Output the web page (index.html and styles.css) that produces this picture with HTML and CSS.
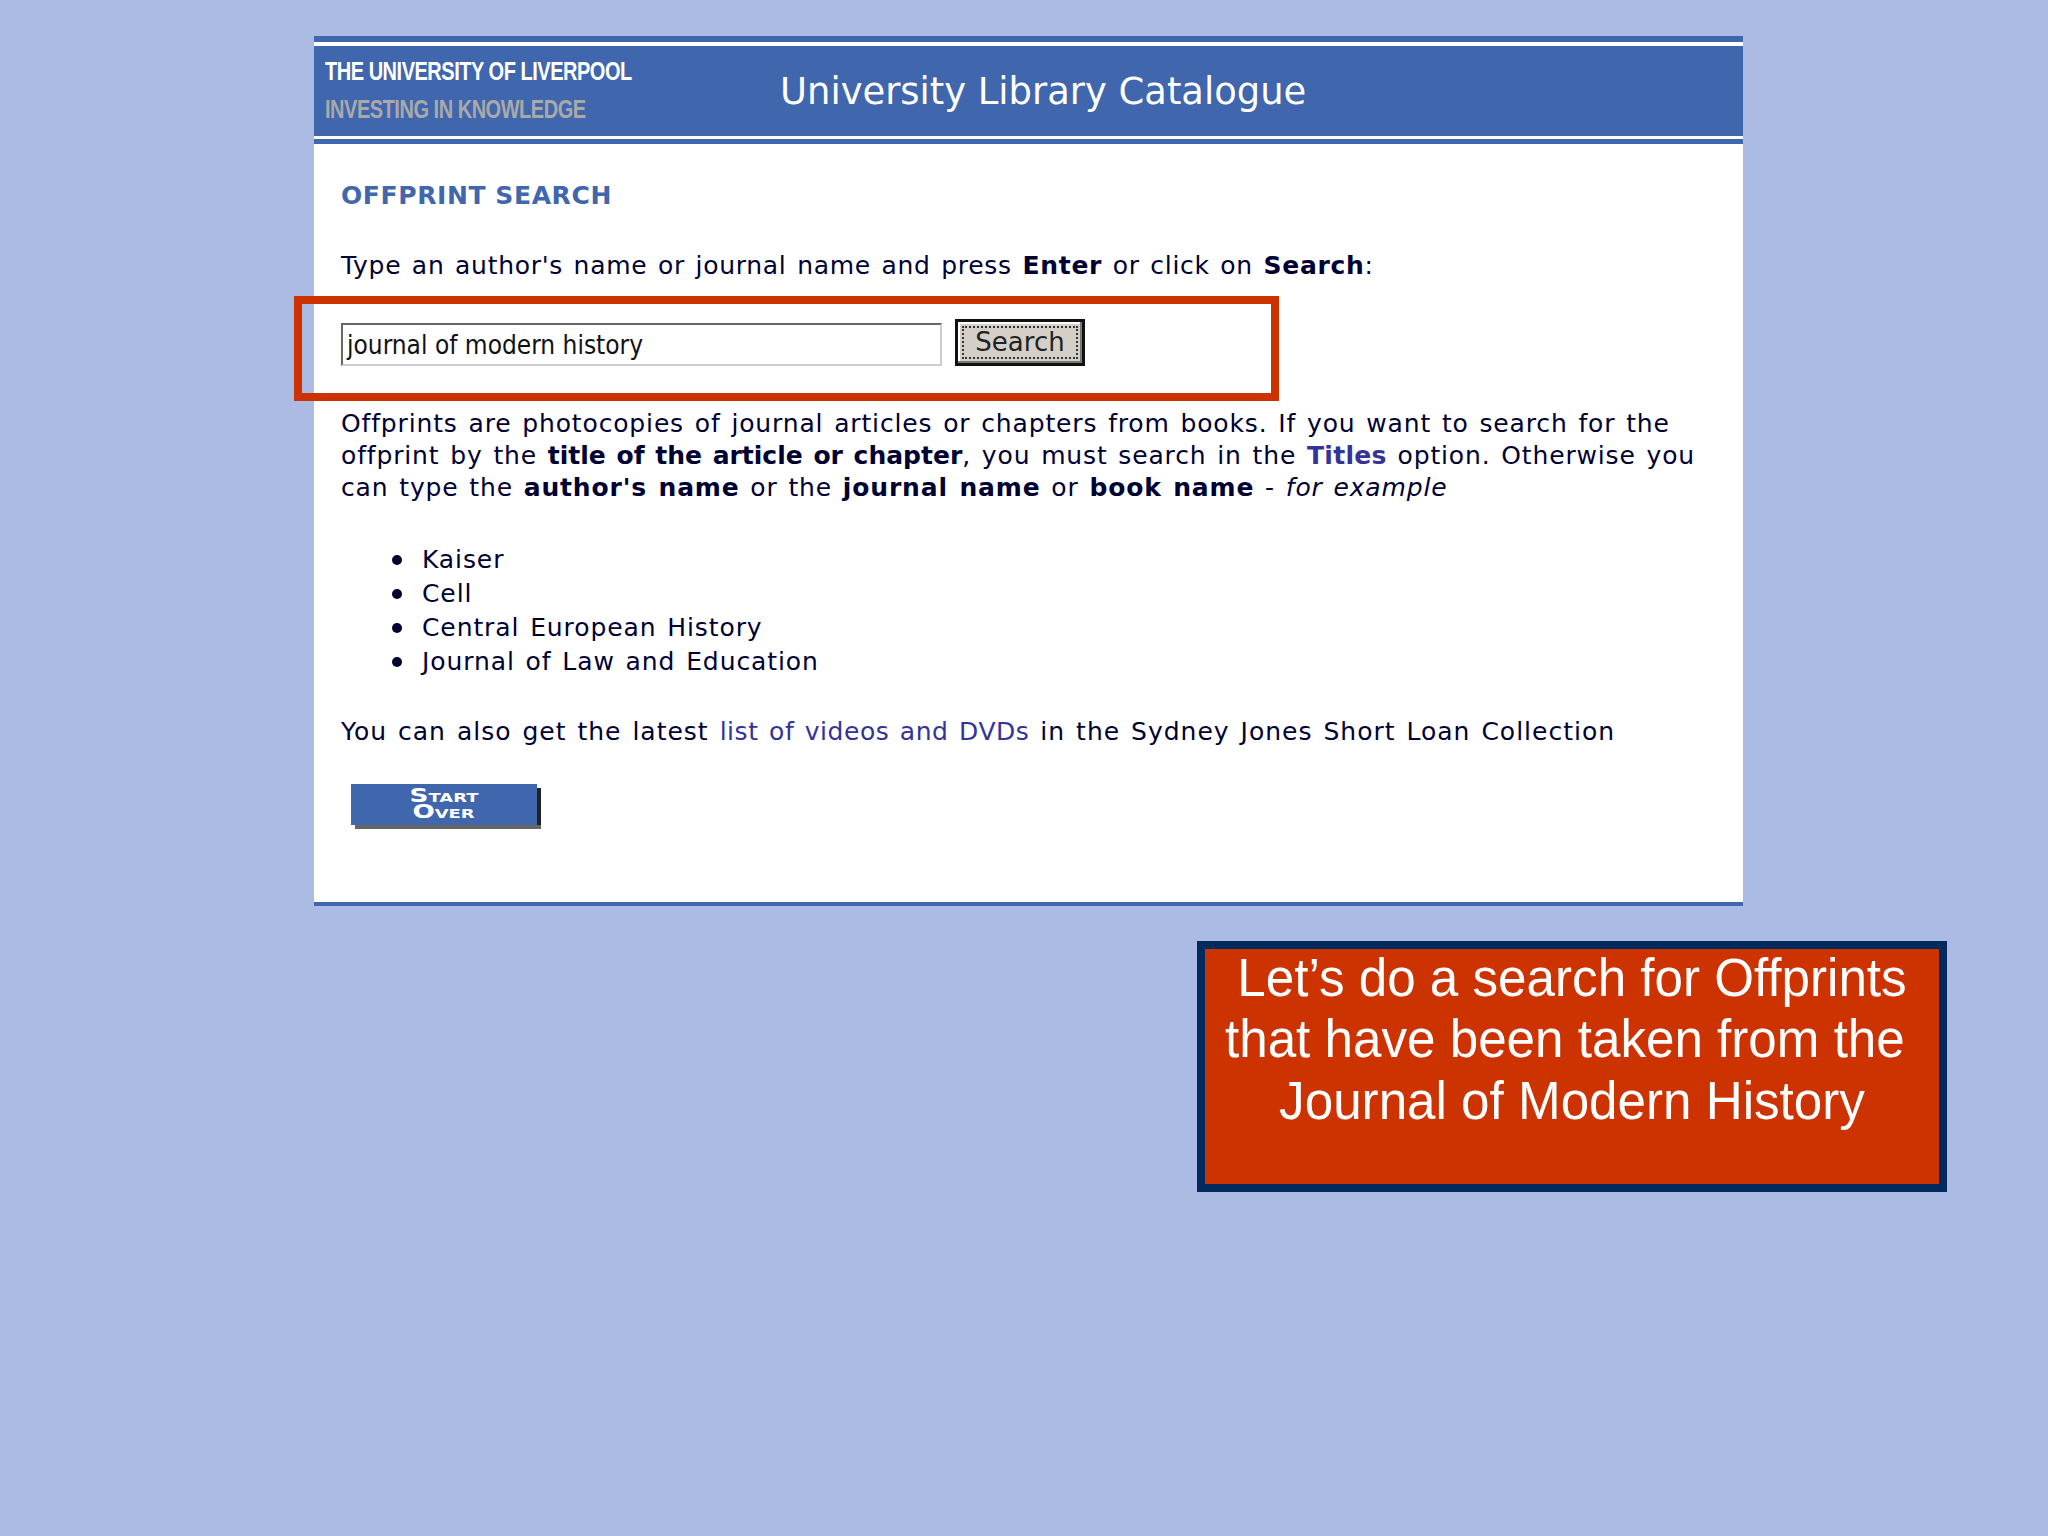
FILE: index.html
```html
<!DOCTYPE html>
<html lang="en">
<head>
<meta charset="utf-8">
<title>Offprint Search</title>
<link rel="stylesheet" href="styles.css">
</head>
<body>
<main class="slide">
  <section class="panel">
    <header class="masthead">
      <div class="brand">
        <div class="brand-name">THE UNIVERSITY OF LIVERPOOL</div>
        <div class="brand-motto">INVESTING IN KNOWLEDGE</div>
      </div>
      <h1 class="cat-title">University Library Catalogue</h1>
    </header>
    <div class="content">
      <h2 class="heading">OFFPRINT SEARCH</h2>
      <p class="intro">Type an author's name or journal name and press <b>Enter</b> or click on <b>Search</b>:</p>
      <form class="search">
        <div class="fake-input">journal of modern history</div>
        <div class="fake-button"><span class="focus-ring">Search</span></div>
      </form>
      <p class="para">Offprints are photocopies of journal articles or chapters from books. If you want to search for the offprint by the <b class="tight">title of the article or chapter</b>, you must search in the <b class="link titles">Titles</b> option. Otherwise you can type the <b>author's name</b> or the <b>journal name</b> or <b>book name</b> - <i>for example</i></p>
      <ul class="examples">
        <li>Kaiser</li>
        <li>Cell</li>
        <li>Central European History</li>
        <li>Journal of Law and Education</li>
      </ul>
      <p class="latest">You can also get the latest <span class="link">list of videos and DVDs</span> in the Sydney Jones Short Loan Collection</p>
      <div class="start-over"><span>Start</span><span>Over</span></div>
      <div class="highlight"></div>
    </div>
  </section>
  <aside class="callout"><div class="callout-text">Let’s do a search for Offprints that have been taken from the&nbsp; Journal of Modern History</div></aside>
</main>
</body>
</html>
```
FILE: styles.css
```css
* { box-sizing: border-box; }
html, body { margin: 0; height: 100%; }
body { background: #abbbe3; overflow: hidden; }
.slide { width: 2048px; height: 1536px; padding: 36px 0 0 314px; }

.panel { width: 1429px; height: 870px; background: #fff; border-bottom: 4px solid #4066ae; display: flex; flex-direction: column; }
.masthead {
  height: 108px; background: #4066ae; display: flex; align-items: center;
  padding: 5px 0 0 11px;
  box-shadow: inset 0 6px 0 #4066ae, inset 0 10px 0 #fff, inset 0 -5px 0 #4066ae, inset 0 -8px 0 #fff;
}
.brand { width: 455px; flex: none; margin-bottom: 6px; }
.brand-name, .brand-motto { font: 700 25px/38px "Liberation Sans", sans-serif; letter-spacing: -.6px; white-space: nowrap; transform: scaleX(.8); transform-origin: left center; }
.brand-name { color: #fff; }
.brand-motto { color: #a9a9a9; }
.cat-title { margin: 0; font: 400 36.9px/1 "DejaVu Sans", sans-serif; color: #fff; }

.content { position: relative; flex: 1; padding: 0 27px; font: 400 25px/32px "DejaVu Sans", sans-serif; letter-spacing: .7px; word-spacing: 2px; color: #000033; }
.heading { margin: 36px 0 0; font: 700 25px/32px "DejaVu Sans", sans-serif; letter-spacing: .6px; word-spacing: 0; color: #4066ae; }
.intro { margin: 38px 0 0; white-space: nowrap; }
.search { display: flex; align-items: flex-start; margin: 37px 0 0; letter-spacing: 0; word-spacing: 0; }
.fake-input { width: 601px; height: 43px; margin-top: 4px; padding: 4px 0 0 4px; background: #fff; border: 2px solid; border-color: #666 #ccc #ccc #666; font: 400 26px/32px "DejaVu Sans Condensed", "DejaVu Sans", sans-serif; color: #111; white-space: nowrap; }
.fake-button { width: 130px; height: 47px; margin-left: 13px; padding: 4px; background: #d4d0c8; border: 3px solid #111; box-shadow: inset -2px -2px 0 #777, inset 2px 2px 0 #fff; }
.focus-ring { display: block; height: 100%; border: 2px dotted #333; text-align: center; font: 400 26px/28px "DejaVu Sans", sans-serif; color: #222; }
.para { margin: 42px 0 0; letter-spacing: .85px; }
.tight { letter-spacing: 0; }
.titles { letter-spacing: .3px; }
.examples { margin: 39px 0 0; padding: 0 0 0 81px; line-height: 34px; list-style: none; letter-spacing: .9px; }
.examples li { position: relative; }
.examples li::before { content: ""; position: absolute; left: -30px; top: 12px; width: 10px; height: 10px; border-radius: 50%; background: #000033; }
.latest { margin: 37px 0 0; white-space: nowrap; letter-spacing: 1px; }
.link { color: #333399; }
.latest .link { letter-spacing: .55px; }
.start-over {
  position: relative; width: 186px; height: 41px; margin: 36px 0 0 10px; padding-bottom: 3px; background: #4066ae; color: #fff;
  box-shadow: 4px 4px 0 #666; display: flex; flex-direction: column; align-items: center; justify-content: center;
  font: 700 19px/16px "DejaVu Sans", sans-serif; font-variant: small-caps; letter-spacing: 0; word-spacing: 0;
}
.start-over span { transform: scaleX(1.38); }
.start-over::after { content: ""; position: absolute; right: -4px; top: 4px; width: 4px; height: 37px; background: #222; }
.highlight { position: absolute; left: -20px; top: 152px; width: 985px; height: 105px; border: 8px solid #cc3300; }

.callout {
  width: 750px; height: 251px; margin: 35px 0 0 883px; background: #cc3300; border: 8px solid #002b5c;
  color: #fff; text-align: center; font: 400 53.3px/61.3px "Liberation Sans", sans-serif;
}
.callout-text { margin-top: -2px; transform: scaleX(.96); }
```
